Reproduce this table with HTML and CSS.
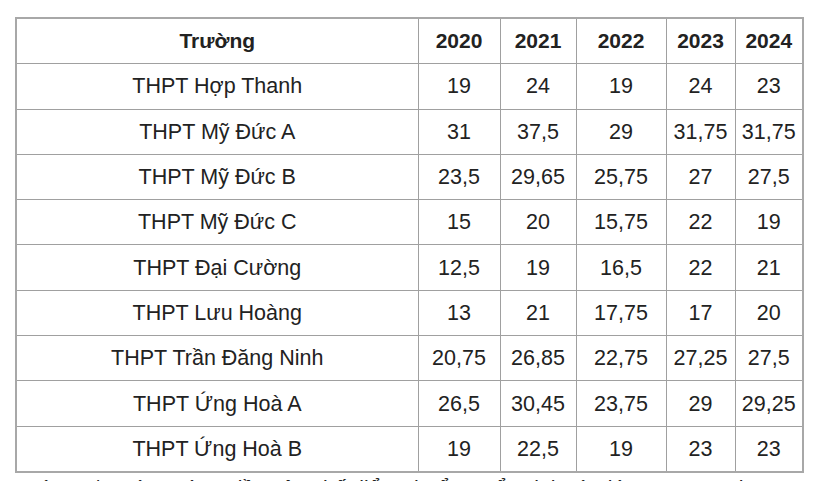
FILE: index.html
```html
<!DOCTYPE html>
<html>
<head>
<meta charset="utf-8">
<link rel="stylesheet" href="styles.css">
</head>
<body>
<table class="scores">
  <colgroup>
    <col class="c-name"><col class="c-2020"><col class="c-2021"><col class="c-2022"><col class="c-2023"><col class="c-2024">
  </colgroup>
  <thead>
    <tr><th>Trường</th><th>2020</th><th>2021</th><th>2022</th><th>2023</th><th>2024</th></tr>
  </thead>
  <tbody>
    <tr><td>THPT Hợp Thanh</td><td>19</td><td>24</td><td>19</td><td>24</td><td>23</td></tr>
    <tr><td>THPT Mỹ Đức A</td><td>31</td><td>37,5</td><td>29</td><td>31,75</td><td>31,75</td></tr>
    <tr><td>THPT Mỹ Đức B</td><td>23,5</td><td>29,65</td><td>25,75</td><td>27</td><td>27,5</td></tr>
    <tr><td>THPT Mỹ Đức C</td><td>15</td><td>20</td><td>15,75</td><td>22</td><td>19</td></tr>
    <tr><td>THPT Đại Cường</td><td>12,5</td><td>19</td><td>16,5</td><td>22</td><td>21</td></tr>
    <tr><td>THPT Lưu Hoàng</td><td>13</td><td>21</td><td>17,75</td><td>17</td><td>20</td></tr>
    <tr><td>THPT Trần Đăng Ninh</td><td>20,75</td><td>26,85</td><td>22,75</td><td>27,25</td><td>27,5</td></tr>
    <tr><td>THPT Ứng Hoà A</td><td>26,5</td><td>30,45</td><td>23,75</td><td>29</td><td>29,25</td></tr>
    <tr><td>THPT Ứng Hoà B</td><td>19</td><td>22,5</td><td>19</td><td>23</td><td>23</td></tr>
  </tbody>
</table>
<p class="note">Ngày 10/1, các trường đều công bố điểm chuẩn tuyển sinh vào lớp 10 THPT th</p>
</body>
</html>
```
FILE: styles.css
```css
html, body {
  margin: 0;
  padding: 0;
  background: #ffffff;
  overflow: hidden;
}
body {
  padding: 17px 0 0 15px;
  font-family: "Liberation Sans", Arial, sans-serif;
  color: #222222;
}
.scores {
  border-collapse: collapse;
  table-layout: fixed;
  width: 788px;
  border: 2px solid #a8a8a8;
  font-size: 21.5px;
}
.c-name { width: 402px; }
.c-2020 { width: 82px; }
.c-2021 { width: 76px; }
.c-2022 { width: 90px; }
.c-2023 { width: 69px; }
.c-2024 { width: 68px; }
.scores th, .scores td {
  border: 1px solid #a0a0a0;
  text-align: center;
  vertical-align: middle;
  padding: 0;
  height: 44.3px;
  line-height: 24px;
  white-space: nowrap;
}
.scores th {
  font-weight: bold;
  font-size: 21px;
}
.note {
  margin: 3px 0 0 0;
  font-size: 21px;
  line-height: 24px;
  color: #222222;
  white-space: nowrap;
}
```
